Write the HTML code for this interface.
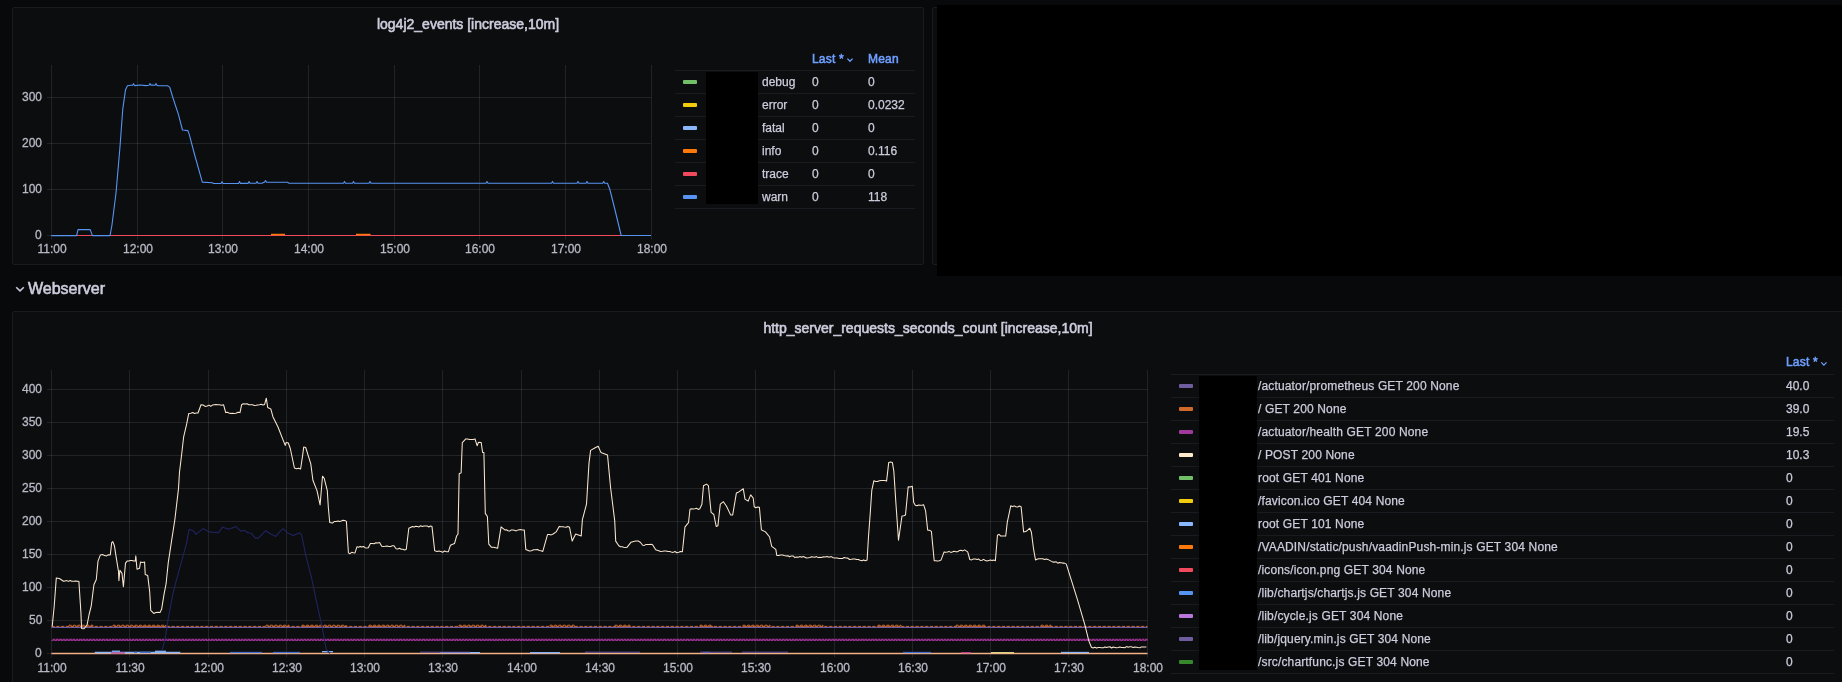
<!DOCTYPE html>
<html><head><meta charset="utf-8">
<style>
html,body{margin:0;padding:0;}
body{width:1842px;height:682px;overflow:hidden;position:relative;background:#08090b;font-family:"Liberation Sans",sans-serif;color:#ccccdc;}
.panel{position:absolute;background:#0c0d0f;border:1px solid #1a1b1f;border-radius:2px;box-sizing:border-box;}
.blk{position:absolute;background:#000;}
.title{position:absolute;font-size:14px;font-weight:400;-webkit-text-stroke:0.6px #ccccdc;line-height:14px;white-space:nowrap;color:#ccccdc;text-align:center;}
.ax,.lt,.lh{position:absolute;font-size:12px;line-height:12px;white-space:nowrap;}
.ax{color:#b9b9c6;-webkit-text-stroke:0.3px #b9b9c6;}
.c{text-align:center;}
.lt{color:#ccccdc;-webkit-text-stroke:0.25px #ccccdc;}
.lw{letter-spacing:0.15px;}
.lh{color:#6e9fff;font-weight:400;letter-spacing:0.2px;-webkit-text-stroke:0.55px #6e9fff;}
.sep{position:absolute;height:1px;background:#1a1b20;}
.bar{position:absolute;width:14px;height:4px;border-radius:1px;}
svg.ov{position:absolute;left:0;top:0;}
.title,.ax,.lt,.lh,.row{will-change:transform;}
.row{position:absolute;left:28px;top:281px;font-size:16px;font-weight:400;-webkit-text-stroke:0.6px #ccccdc;line-height:16px;color:#ccccdc;white-space:nowrap;}
</style></head><body>
<div class="panel" style="left:12px;top:7px;width:912px;height:258px;"></div>
<div class="panel" style="left:932px;top:7px;width:920px;height:258px;"></div>
<div class="panel" style="left:12px;top:311px;width:1832px;height:400px;"></div>
<div class="title" style="left:268px;top:17px;width:400px;">log4j2_events [increase,10m]</div>
<div class="title" style="left:628px;top:321px;width:600px;">http_server_requests_seconds_count [increase,10m]</div>
<svg class="ov" width="1842" height="682" viewBox="0 0 1842 682">
<line x1="51.5" y1="65.0" x2="51.5" y2="239.5" stroke="rgba(200,200,212,0.12)" stroke-width="1"/>
<line x1="137.5" y1="65.0" x2="137.5" y2="239.5" stroke="rgba(200,200,212,0.12)" stroke-width="1"/>
<line x1="222.5" y1="65.0" x2="222.5" y2="239.5" stroke="rgba(200,200,212,0.12)" stroke-width="1"/>
<line x1="308.5" y1="65.0" x2="308.5" y2="239.5" stroke="rgba(200,200,212,0.12)" stroke-width="1"/>
<line x1="394.5" y1="65.0" x2="394.5" y2="239.5" stroke="rgba(200,200,212,0.12)" stroke-width="1"/>
<line x1="479.5" y1="65.0" x2="479.5" y2="239.5" stroke="rgba(200,200,212,0.12)" stroke-width="1"/>
<line x1="565.5" y1="65.0" x2="565.5" y2="239.5" stroke="rgba(200,200,212,0.12)" stroke-width="1"/>
<line x1="651.5" y1="65.0" x2="651.5" y2="239.5" stroke="rgba(200,200,212,0.12)" stroke-width="1"/>
<line x1="47" y1="235.5" x2="651.0" y2="235.5" stroke="rgba(200,200,212,0.12)" stroke-width="1"/>
<line x1="47" y1="189.5" x2="651.0" y2="189.5" stroke="rgba(200,200,212,0.12)" stroke-width="1"/>
<line x1="47" y1="143.5" x2="651.0" y2="143.5" stroke="rgba(200,200,212,0.12)" stroke-width="1"/>
<line x1="47" y1="97.5" x2="651.0" y2="97.5" stroke="rgba(200,200,212,0.12)" stroke-width="1"/>
<line x1="51.5" y1="370" x2="51.5" y2="657.5" stroke="rgba(200,200,212,0.12)" stroke-width="1"/>
<line x1="129.5" y1="370" x2="129.5" y2="657.5" stroke="rgba(200,200,212,0.12)" stroke-width="1"/>
<line x1="208.5" y1="370" x2="208.5" y2="657.5" stroke="rgba(200,200,212,0.12)" stroke-width="1"/>
<line x1="286.5" y1="370" x2="286.5" y2="657.5" stroke="rgba(200,200,212,0.12)" stroke-width="1"/>
<line x1="364.5" y1="370" x2="364.5" y2="657.5" stroke="rgba(200,200,212,0.12)" stroke-width="1"/>
<line x1="442.5" y1="370" x2="442.5" y2="657.5" stroke="rgba(200,200,212,0.12)" stroke-width="1"/>
<line x1="521.5" y1="370" x2="521.5" y2="657.5" stroke="rgba(200,200,212,0.12)" stroke-width="1"/>
<line x1="599.5" y1="370" x2="599.5" y2="657.5" stroke="rgba(200,200,212,0.12)" stroke-width="1"/>
<line x1="677.5" y1="370" x2="677.5" y2="657.5" stroke="rgba(200,200,212,0.12)" stroke-width="1"/>
<line x1="755.5" y1="370" x2="755.5" y2="657.5" stroke="rgba(200,200,212,0.12)" stroke-width="1"/>
<line x1="834.5" y1="370" x2="834.5" y2="657.5" stroke="rgba(200,200,212,0.12)" stroke-width="1"/>
<line x1="912.5" y1="370" x2="912.5" y2="657.5" stroke="rgba(200,200,212,0.12)" stroke-width="1"/>
<line x1="990.5" y1="370" x2="990.5" y2="657.5" stroke="rgba(200,200,212,0.12)" stroke-width="1"/>
<line x1="1068.5" y1="370" x2="1068.5" y2="657.5" stroke="rgba(200,200,212,0.12)" stroke-width="1"/>
<line x1="1147.5" y1="370" x2="1147.5" y2="657.5" stroke="rgba(200,200,212,0.12)" stroke-width="1"/>
<line x1="47" y1="653.5" x2="1147.5" y2="653.5" stroke="rgba(200,200,212,0.12)" stroke-width="1"/>
<line x1="47" y1="620.5" x2="1147.5" y2="620.5" stroke="rgba(200,200,212,0.12)" stroke-width="1"/>
<line x1="47" y1="587.5" x2="1147.5" y2="587.5" stroke="rgba(200,200,212,0.12)" stroke-width="1"/>
<line x1="47" y1="554.5" x2="1147.5" y2="554.5" stroke="rgba(200,200,212,0.12)" stroke-width="1"/>
<line x1="47" y1="521.5" x2="1147.5" y2="521.5" stroke="rgba(200,200,212,0.12)" stroke-width="1"/>
<line x1="47" y1="488.5" x2="1147.5" y2="488.5" stroke="rgba(200,200,212,0.12)" stroke-width="1"/>
<line x1="47" y1="455.5" x2="1147.5" y2="455.5" stroke="rgba(200,200,212,0.12)" stroke-width="1"/>
<line x1="47" y1="422.5" x2="1147.5" y2="422.5" stroke="rgba(200,200,212,0.12)" stroke-width="1"/>
<line x1="47" y1="389.5" x2="1147.5" y2="389.5" stroke="rgba(200,200,212,0.12)" stroke-width="1"/>
<polyline points="51.5,235.5 651.0,235.5" fill="none" stroke="#F2495C" stroke-width="1.2"/>
<polyline points="271,234.5 285,234.5" fill="none" stroke="#FF780A" stroke-width="1.5"/>
<polyline points="356,234.5 370.5,234.5" fill="none" stroke="#FF780A" stroke-width="1.5"/>
<polyline points="51.4,235.6 76.6,235.6 78.0,229.6 90.2,229.6 92.4,235.6 110.0,235.6 111.9,225.5 116.0,193.0 120.0,146.8 122.8,108.8 125.5,89.9 127.4,85.8 131.0,85.2 132.5,85.3 133.5,83.7 134.5,85.5 135.0,85.6 140.0,85.0 146.0,85.6 149.0,85.3 150.0,83.5 151.0,85.2 152.0,85.1 155.0,85.3 156.0,83.6 157.0,85.5 158.0,85.6 167.5,85.8 169.7,87.1 173.0,98.0 178.4,114.3 182.5,130.0 187.9,130.6 189.3,134.6 194.7,155.0 202.3,182.1 212.3,182.7 213.7,183.5 221.0,183.5 222.0,181.7 223.0,183.5 238.5,183.4 239.5,181.6 240.5,183.4 248.0,183.4 249.0,181.6 250.0,183.3 256.0,183.3 257.0,181.5 258.0,183.3 262.0,183.3 264.0,182.3 264.5,182.3 265.5,180.5 266.5,182.3 275.0,182.2 287.5,182.2 289.0,183.2 343.5,183.2 344.5,181.4 345.5,183.2 352.5,183.2 353.5,181.4 354.5,183.2 369.0,183.2 370.0,181.4 371.0,183.2 486.0,183.2 487.0,181.4 488.0,183.2 551.5,183.2 552.5,181.4 553.5,183.2 577.0,183.2 578.0,181.4 579.0,183.2 586.0,183.2 587.0,181.4 588.0,183.2 602.7,183.2 603.7,181.4 604.7,183.2 607.5,183.2 610.0,190.0 615.0,210.0 621.2,235.5 651.0,235.5" fill="none" stroke="#5794F2" stroke-width="1.1" stroke-linejoin="round"/>
<polyline points="51.5,653.5 1147.5,653.5" fill="none" stroke="#F4B183" stroke-width="1.3"/>
<polyline points="94.8,652.5 180.3,652.5" fill="none" stroke="#8AB8FF" stroke-width="1.3"/>
<polyline points="111.9,651.2 120,651.2" fill="none" stroke="#8AB8FF" stroke-width="1.3"/>
<polyline points="111,653.0 125,653.0" fill="none" stroke="#C04090" stroke-width="1.3"/>
<polyline points="133.9,652.3 137,652.3" fill="none" stroke="#3F6FD0" stroke-width="1.3"/>
<polyline points="140,652.3 151,652.3" fill="none" stroke="#3F6FD0" stroke-width="1.3"/>
<polyline points="155,651.3 166,651.3" fill="none" stroke="#8AB8FF" stroke-width="1.3"/>
<polyline points="230,652.5 262,652.5" fill="none" stroke="#3F6FD0" stroke-width="1.3"/>
<polyline points="273,652.5 300,652.5" fill="none" stroke="#3F6FD0" stroke-width="1.3"/>
<polyline points="322,651.7 333,651.7" fill="none" stroke="#8AB8FF" stroke-width="1.3"/>
<polyline points="440,652.7 480,652.7" fill="none" stroke="#8AB8FF" stroke-width="1.3"/>
<polyline points="530,652.7 560,652.7" fill="none" stroke="#8AB8FF" stroke-width="1.3"/>
<polyline points="703,652.5 710,652.5" fill="none" stroke="#3F6FD0" stroke-width="1.3"/>
<polyline points="903,652.5 931,652.5" fill="none" stroke="#3F6FD0" stroke-width="1.3"/>
<polyline points="961,652.7 971,652.7" fill="none" stroke="#C04090" stroke-width="1.3"/>
<polyline points="991,652.7 1014,652.7" fill="none" stroke="#E8D890" stroke-width="1.3"/>
<polyline points="1061,652.5 1089,652.5" fill="none" stroke="#8AB8FF" stroke-width="1.3"/>
<polyline points="51.5,640.5 53.1,640.5 53.1,639.4 54.8,639.4 54.8,640.5 56.4,640.5 56.4,639.4 58.1,639.4 58.1,640.5 59.7,640.5 59.7,639.4 61.4,639.4 61.4,640.5 63.0,640.5 63.0,639.4 64.7,639.4 64.7,640.5 66.3,640.5 66.3,639.4 68.0,639.4 68.0,640.5 69.7,640.5 69.7,639.4 71.3,639.4 71.3,640.5 73.0,640.5 73.0,639.4 74.6,639.4 74.6,640.5 76.3,640.5 76.3,639.4 77.9,639.4 77.9,640.5 79.6,640.5 79.6,639.4 81.2,639.4 81.2,640.5 82.9,640.5 82.9,639.4 84.5,639.4 84.5,640.5 86.2,640.5 86.2,639.4 87.8,639.4 87.8,640.5 89.5,640.5 89.5,639.4 91.1,639.4 91.1,640.5 92.8,640.5 92.8,639.4 94.4,639.4 94.4,640.5 96.1,640.5 96.1,639.4 97.7,639.4 97.7,640.5 99.4,640.5 99.4,639.4 101.0,639.4 101.0,640.5 102.7,640.5 102.7,639.4 104.3,639.4 104.3,640.5 106.0,640.5 106.0,639.4 107.6,639.4 107.6,640.5 109.3,640.5 109.3,639.4 110.9,639.4 110.9,640.5 112.6,640.5 112.6,639.4 114.2,639.4 114.2,640.5 115.9,640.5 115.9,639.4 117.5,639.4 117.5,640.5 119.2,640.5 119.2,639.4 120.8,639.4 120.8,640.5 122.5,640.5 122.5,639.4 124.1,639.4 124.1,640.5 125.8,640.5 125.8,639.4 127.4,639.4 127.4,640.5 129.1,640.5 129.1,639.4 130.7,639.4 130.7,640.5 132.4,640.5 132.4,639.4 134.0,639.4 134.0,640.5 135.7,640.5 135.7,639.4 137.3,639.4 137.3,640.5 139.0,640.5 139.0,639.4 140.6,639.4 140.6,640.5 142.3,640.5 142.3,639.4 143.9,639.4 143.9,640.5 145.6,640.5 145.6,639.4 147.2,639.4 147.2,640.5 148.9,640.5 148.9,639.4 150.5,639.4 150.5,640.5 152.2,640.5 152.2,639.4 153.8,639.4 153.8,640.5 155.5,640.5 155.5,639.4 157.1,639.4 157.1,640.5 158.8,640.5 158.8,639.4 160.4,639.4 160.4,640.5 162.1,640.5 162.1,639.4 163.7,639.4 163.7,640.5 165.4,640.5 165.4,639.4 167.0,639.4 167.0,640.5 168.7,640.5 168.7,639.4 170.3,639.4 170.3,640.5 172.0,640.5 172.0,639.4 173.6,639.4 173.6,640.5 175.3,640.5 175.3,639.4 176.9,639.4 176.9,640.5 178.6,640.5 178.6,639.4 180.2,639.4 180.2,640.5 181.9,640.5 181.9,639.4 183.5,639.4 183.5,640.5 185.2,640.5 185.2,639.4 186.8,639.4 186.8,640.5 188.5,640.5 188.5,639.4 190.1,639.4 190.1,640.5 191.8,640.5 191.8,639.4 193.4,639.4 193.4,640.5 195.1,640.5 195.1,639.4 196.7,639.4 196.7,640.5 198.4,640.5 198.4,639.4 200.0,639.4 200.0,640.5 201.7,640.5 201.7,639.4 203.3,639.4 203.3,640.5 205.0,640.5 205.0,639.4 206.6,639.4 206.6,640.5 208.3,640.5 208.3,639.4 209.9,639.4 209.9,640.5 211.6,640.5 211.6,639.4 213.2,639.4 213.2,640.5 214.9,640.5 214.9,639.4 216.5,639.4 216.5,640.5 218.2,640.5 218.2,639.4 219.8,639.4 219.8,640.5 221.5,640.5 221.5,639.4 223.1,639.4 223.1,640.5 224.8,640.5 224.8,639.4 226.4,639.4 226.4,640.5 228.1,640.5 228.1,639.4 229.7,639.4 229.7,640.5 231.4,640.5 231.4,639.4 233.0,639.4 233.0,640.5 234.7,640.5 234.7,639.4 236.3,639.4 236.3,640.5 238.0,640.5 238.0,639.4 239.6,639.4 239.6,640.5 241.3,640.5 241.3,639.4 242.9,639.4 242.9,640.5 244.6,640.5 244.6,639.4 246.2,639.4 246.2,640.5 247.9,640.5 247.9,639.4 249.5,639.4 249.5,640.5 251.2,640.5 251.2,639.4 252.8,639.4 252.8,640.5 254.5,640.5 254.5,639.4 256.1,639.4 256.1,640.5 257.8,640.5 257.8,639.4 259.4,639.4 259.4,640.5 261.1,640.5 261.1,639.4 262.7,639.4 262.7,640.5 264.4,640.5 264.4,639.4 266.0,639.4 266.0,640.5 267.7,640.5 267.7,639.4 269.3,639.4 269.3,640.5 271.0,640.5 271.0,639.4 272.6,639.4 272.6,640.5 274.3,640.5 274.3,639.4 275.9,639.4 275.9,640.5 277.6,640.5 277.6,639.4 279.2,639.4 279.2,640.5 280.9,640.5 280.9,639.4 282.5,639.4 282.5,640.5 284.2,640.5 284.2,639.4 285.8,639.4 285.8,640.5 287.5,640.5 287.5,639.4 289.1,639.4 289.1,640.5 290.8,640.5 290.8,639.4 292.4,639.4 292.4,640.5 294.1,640.5 294.1,639.4 295.7,639.4 295.7,640.5 297.4,640.5 297.4,639.4 299.0,639.4 299.0,640.5 300.7,640.5 300.7,639.4 302.3,639.4 302.3,640.5 303.9,640.5 303.9,639.4 305.6,639.4 305.6,640.5 307.2,640.5 307.2,639.4 308.9,639.4 308.9,640.5 310.5,640.5 310.5,639.4 312.2,639.4 312.2,640.5 313.8,640.5 313.8,639.4 315.5,639.4 315.5,640.5 317.1,640.5 317.1,639.4 318.8,639.4 318.8,640.5 320.4,640.5 320.4,639.4 322.1,639.4 322.1,640.5 323.7,640.5 323.7,639.4 325.4,639.4 325.4,640.5 327.0,640.5 327.0,639.4 328.7,639.4 328.7,640.5 330.3,640.5 330.3,639.4 332.0,639.4 332.0,640.5 333.6,640.5 333.6,639.4 335.3,639.4 335.3,640.5 336.9,640.5 336.9,639.4 338.6,639.4 338.6,640.5 340.2,640.5 340.2,639.4 341.9,639.4 341.9,640.5 343.5,640.5 343.5,639.4 345.2,639.4 345.2,640.5 346.8,640.5 346.8,639.4 348.5,639.4 348.5,640.5 350.1,640.5 350.1,639.4 351.8,639.4 351.8,640.5 353.4,640.5 353.4,639.4 355.1,639.4 355.1,640.5 356.7,640.5 356.7,639.4 358.4,639.4 358.4,640.5 360.0,640.5 360.0,639.4 361.7,639.4 361.7,640.5 363.3,640.5 363.3,639.4 365.0,639.4 365.0,640.5 366.6,640.5 366.6,639.4 368.3,639.4 368.3,640.5 369.9,640.5 369.9,639.4 371.6,639.4 371.6,640.5 373.2,640.5 373.2,639.4 374.9,639.4 374.9,640.5 376.5,640.5 376.5,639.4 378.2,639.4 378.2,640.5 379.8,640.5 379.8,639.4 381.5,639.4 381.5,640.5 383.1,640.5 383.1,639.4 384.8,639.4 384.8,640.5 386.4,640.5 386.4,639.4 388.1,639.4 388.1,640.5 389.7,640.5 389.7,639.4 391.4,639.4 391.4,640.5 393.0,640.5 393.0,639.4 394.7,639.4 394.7,640.5 396.3,640.5 396.3,639.4 398.0,639.4 398.0,640.5 399.6,640.5 399.6,639.4 401.3,639.4 401.3,640.5 402.9,640.5 402.9,639.4 404.6,639.4 404.6,640.5 406.2,640.5 406.2,639.4 407.9,639.4 407.9,640.5 409.5,640.5 409.5,639.4 411.2,639.4 411.2,640.5 412.8,640.5 412.8,639.4 414.5,639.4 414.5,640.5 416.1,640.5 416.1,639.4 417.8,639.4 417.8,640.5 419.4,640.5 419.4,639.4 421.1,639.4 421.1,640.5 422.7,640.5 422.7,639.4 424.4,639.4 424.4,640.5 426.0,640.5 426.0,639.4 427.7,639.4 427.7,640.5 429.3,640.5 429.3,639.4 431.0,639.4 431.0,640.5 432.6,640.5 432.6,639.4 434.3,639.4 434.3,640.5 435.9,640.5 435.9,639.4 437.6,639.4 437.6,640.5 439.2,640.5 439.2,639.4 440.9,639.4 440.9,640.5 442.5,640.5 442.5,639.4 444.2,639.4 444.2,640.5 445.8,640.5 445.8,639.4 447.5,639.4 447.5,640.5 449.1,640.5 449.1,639.4 450.8,639.4 450.8,640.5 452.4,640.5 452.4,639.4 454.1,639.4 454.1,640.5 455.7,640.5 455.7,639.4 457.4,639.4 457.4,640.5 459.0,640.5 459.0,639.4 460.7,639.4 460.7,640.5 462.3,640.5 462.3,639.4 464.0,639.4 464.0,640.5 465.6,640.5 465.6,639.4 467.3,639.4 467.3,640.5 468.9,640.5 468.9,639.4 470.6,639.4 470.6,640.5 472.2,640.5 472.2,639.4 473.9,639.4 473.9,640.5 475.5,640.5 475.5,639.4 477.2,639.4 477.2,640.5 478.8,640.5 478.8,639.4 480.5,639.4 480.5,640.5 482.1,640.5 482.1,639.4 483.8,639.4 483.8,640.5 485.4,640.5 485.4,639.4 487.1,639.4 487.1,640.5 488.7,640.5 488.7,639.4 490.4,639.4 490.4,640.5 492.0,640.5 492.0,639.4 493.7,639.4 493.7,640.5 495.3,640.5 495.3,639.4 497.0,639.4 497.0,640.5 498.6,640.5 498.6,639.4 500.3,639.4 500.3,640.5 501.9,640.5 501.9,639.4 503.6,639.4 503.6,640.5 505.2,640.5 505.2,639.4 506.9,639.4 506.9,640.5 508.5,640.5 508.5,639.4 510.2,639.4 510.2,640.5 511.8,640.5 511.8,639.4 513.5,639.4 513.5,640.5 515.1,640.5 515.1,639.4 516.8,639.4 516.8,640.5 518.4,640.5 518.4,639.4 520.1,639.4 520.1,640.5 521.7,640.5 521.7,639.4 523.4,639.4 523.4,640.5 525.0,640.5 525.0,639.4 526.7,639.4 526.7,640.5 528.3,640.5 528.3,639.4 530.0,639.4 530.0,640.5 531.6,640.5 531.6,639.4 533.3,639.4 533.3,640.5 534.9,640.5 534.9,639.4 536.6,639.4 536.6,640.5 538.2,640.5 538.2,639.4 539.9,639.4 539.9,640.5 541.5,640.5 541.5,639.4 543.2,639.4 543.2,640.5 544.8,640.5 544.8,639.4 546.5,639.4 546.5,640.5 548.1,640.5 548.1,639.4 549.8,639.4 549.8,640.5 551.4,640.5 551.4,639.4 553.1,639.4 553.1,640.5 554.7,640.5 554.7,639.4 556.4,639.4 556.4,640.5 558.0,640.5 558.0,639.4 559.7,639.4 559.7,640.5 561.3,640.5 561.3,639.4 563.0,639.4 563.0,640.5 564.6,640.5 564.6,639.4 566.3,639.4 566.3,640.5 567.9,640.5 567.9,639.4 569.6,639.4 569.6,640.5 571.2,640.5 571.2,639.4 572.9,639.4 572.9,640.5 574.5,640.5 574.5,639.4 576.2,639.4 576.2,640.5 577.8,640.5 577.8,639.4 579.5,639.4 579.5,640.5 581.1,640.5 581.1,639.4 582.8,639.4 582.8,640.5 584.4,640.5 584.4,639.4 586.1,639.4 586.1,640.5 587.7,640.5 587.7,639.4 589.4,639.4 589.4,640.5 591.0,640.5 591.0,639.4 592.7,639.4 592.7,640.5 594.3,640.5 594.3,639.4 596.0,639.4 596.0,640.5 597.6,640.5 597.6,639.4 599.3,639.4 599.3,640.5 600.9,640.5 600.9,639.4 602.6,639.4 602.6,640.5 604.2,640.5 604.2,639.4 605.9,639.4 605.9,640.5 607.5,640.5 607.5,639.4 609.2,639.4 609.2,640.5 610.8,640.5 610.8,639.4 612.5,639.4 612.5,640.5 614.1,640.5 614.1,639.4 615.8,639.4 615.8,640.5 617.4,640.5 617.4,639.4 619.1,639.4 619.1,640.5 620.7,640.5 620.7,639.4 622.4,639.4 622.4,640.5 624.0,640.5 624.0,639.4 625.7,639.4 625.7,640.5 627.3,640.5 627.3,639.4 629.0,639.4 629.0,640.5 630.6,640.5 630.6,639.4 632.3,639.4 632.3,640.5 633.9,640.5 633.9,639.4 635.6,639.4 635.6,640.5 637.2,640.5 637.2,639.4 638.9,639.4 638.9,640.5 640.5,640.5 640.5,639.4 642.2,639.4 642.2,640.5 643.8,640.5 643.8,639.4 645.5,639.4 645.5,640.5 647.1,640.5 647.1,639.4 648.8,639.4 648.8,640.5 650.4,640.5 650.4,639.4 652.1,639.4 652.1,640.5 653.7,640.5 653.7,639.4 655.4,639.4 655.4,640.5 657.0,640.5 657.0,639.4 658.7,639.4 658.7,640.5 660.3,640.5 660.3,639.4 662.0,639.4 662.0,640.5 663.6,640.5 663.6,639.4 665.3,639.4 665.3,640.5 666.9,640.5 666.9,639.4 668.6,639.4 668.6,640.5 670.2,640.5 670.2,639.4 671.9,639.4 671.9,640.5 673.5,640.5 673.5,639.4 675.2,639.4 675.2,640.5 676.8,640.5 676.8,639.4 678.5,639.4 678.5,640.5 680.1,640.5 680.1,639.4 681.8,639.4 681.8,640.5 683.4,640.5 683.4,639.4 685.1,639.4 685.1,640.5 686.7,640.5 686.7,639.4 688.4,639.4 688.4,640.5 690.0,640.5 690.0,639.4 691.7,639.4 691.7,640.5 693.3,640.5 693.3,639.4 695.0,639.4 695.0,640.5 696.6,640.5 696.6,639.4 698.3,639.4 698.3,640.5 699.9,640.5 699.9,639.4 701.6,639.4 701.6,640.5 703.2,640.5 703.2,639.4 704.9,639.4 704.9,640.5 706.5,640.5 706.5,639.4 708.2,639.4 708.2,640.5 709.8,640.5 709.8,639.4 711.5,639.4 711.5,640.5 713.1,640.5 713.1,639.4 714.8,639.4 714.8,640.5 716.4,640.5 716.4,639.4 718.1,639.4 718.1,640.5 719.7,640.5 719.7,639.4 721.4,639.4 721.4,640.5 723.0,640.5 723.0,639.4 724.7,639.4 724.7,640.5 726.3,640.5 726.3,639.4 728.0,639.4 728.0,640.5 729.6,640.5 729.6,639.4 731.3,639.4 731.3,640.5 732.9,640.5 732.9,639.4 734.6,639.4 734.6,640.5 736.2,640.5 736.2,639.4 737.9,639.4 737.9,640.5 739.5,640.5 739.5,639.4 741.2,639.4 741.2,640.5 742.8,640.5 742.8,639.4 744.5,639.4 744.5,640.5 746.1,640.5 746.1,639.4 747.8,639.4 747.8,640.5 749.4,640.5 749.4,639.4 751.1,639.4 751.1,640.5 752.7,640.5 752.7,639.4 754.4,639.4 754.4,640.5 756.0,640.5 756.0,639.4 757.7,639.4 757.7,640.5 759.3,640.5 759.3,639.4 761.0,639.4 761.0,640.5 762.6,640.5 762.6,639.4 764.3,639.4 764.3,640.5 765.9,640.5 765.9,639.4 767.6,639.4 767.6,640.5 769.2,640.5 769.2,639.4 770.9,639.4 770.9,640.5 772.5,640.5 772.5,639.4 774.2,639.4 774.2,640.5 775.8,640.5 775.8,639.4 777.5,639.4 777.5,640.5 779.1,640.5 779.1,639.4 780.8,639.4 780.8,640.5 782.4,640.5 782.4,639.4 784.1,639.4 784.1,640.5 785.7,640.5 785.7,639.4 787.4,639.4 787.4,640.5 789.0,640.5 789.0,639.4 790.7,639.4 790.7,640.5 792.3,640.5 792.3,639.4 794.0,639.4 794.0,640.5 795.6,640.5 795.6,639.4 797.3,639.4 797.3,640.5 798.9,640.5 798.9,639.4 800.6,639.4 800.6,640.5 802.2,640.5 802.2,639.4 803.9,639.4 803.9,640.5 805.5,640.5 805.5,639.4 807.2,639.4 807.2,640.5 808.8,640.5 808.8,639.4 810.5,639.4 810.5,640.5 812.1,640.5 812.1,639.4 813.8,639.4 813.8,640.5 815.4,640.5 815.4,639.4 817.1,639.4 817.1,640.5 818.7,640.5 818.7,639.4 820.4,639.4 820.4,640.5 822.0,640.5 822.0,639.4 823.7,639.4 823.7,640.5 825.3,640.5 825.3,639.4 827.0,639.4 827.0,640.5 828.6,640.5 828.6,639.4 830.3,639.4 830.3,640.5 831.9,640.5 831.9,639.4 833.6,639.4 833.6,640.5 835.2,640.5 835.2,639.4 836.9,639.4 836.9,640.5 838.5,640.5 838.5,639.4 840.2,639.4 840.2,640.5 841.8,640.5 841.8,639.4 843.5,639.4 843.5,640.5 845.1,640.5 845.1,639.4 846.8,639.4 846.8,640.5 848.4,640.5 848.4,639.4 850.1,639.4 850.1,640.5 851.7,640.5 851.7,639.4 853.4,639.4 853.4,640.5 855.0,640.5 855.0,639.4 856.7,639.4 856.7,640.5 858.3,640.5 858.3,639.4 860.0,639.4 860.0,640.5 861.6,640.5 861.6,639.4 863.3,639.4 863.3,640.5 864.9,640.5 864.9,639.4 866.6,639.4 866.6,640.5 868.2,640.5 868.2,639.4 869.9,639.4 869.9,640.5 871.5,640.5 871.5,639.4 873.2,639.4 873.2,640.5 874.8,640.5 874.8,639.4 876.5,639.4 876.5,640.5 878.1,640.5 878.1,639.4 879.8,639.4 879.8,640.5 881.4,640.5 881.4,639.4 883.1,639.4 883.1,640.5 884.7,640.5 884.7,639.4 886.4,639.4 886.4,640.5 888.0,640.5 888.0,639.4 889.7,639.4 889.7,640.5 891.3,640.5 891.3,639.4 893.0,639.4 893.0,640.5 894.6,640.5 894.6,639.4 896.3,639.4 896.3,640.5 897.9,640.5 897.9,639.4 899.6,639.4 899.6,640.5 901.2,640.5 901.2,639.4 902.9,639.4 902.9,640.5 904.5,640.5 904.5,639.4 906.2,639.4 906.2,640.5 907.8,640.5 907.8,639.4 909.5,639.4 909.5,640.5 911.1,640.5 911.1,639.4 912.8,639.4 912.8,640.5 914.4,640.5 914.4,639.4 916.1,639.4 916.1,640.5 917.7,640.5 917.7,639.4 919.4,639.4 919.4,640.5 921.0,640.5 921.0,639.4 922.7,639.4 922.7,640.5 924.3,640.5 924.3,639.4 926.0,639.4 926.0,640.5 927.6,640.5 927.6,639.4 929.3,639.4 929.3,640.5 930.9,640.5 930.9,639.4 932.6,639.4 932.6,640.5 934.2,640.5 934.2,639.4 935.9,639.4 935.9,640.5 937.5,640.5 937.5,639.4 939.2,639.4 939.2,640.5 940.8,640.5 940.8,639.4 942.5,639.4 942.5,640.5 944.1,640.5 944.1,639.4 945.8,639.4 945.8,640.5 947.4,640.5 947.4,639.4 949.1,639.4 949.1,640.5 950.7,640.5 950.7,639.4 952.4,639.4 952.4,640.5 954.0,640.5 954.0,639.4 955.7,639.4 955.7,640.5 957.3,640.5 957.3,639.4 959.0,639.4 959.0,640.5 960.6,640.5 960.6,639.4 962.3,639.4 962.3,640.5 963.9,640.5 963.9,639.4 965.6,639.4 965.6,640.5 967.2,640.5 967.2,639.4 968.9,639.4 968.9,640.5 970.5,640.5 970.5,639.4 972.2,639.4 972.2,640.5 973.8,640.5 973.8,639.4 975.5,639.4 975.5,640.5 977.1,640.5 977.1,639.4 978.8,639.4 978.8,640.5 980.4,640.5 980.4,639.4 982.1,639.4 982.1,640.5 983.7,640.5 983.7,639.4 985.4,639.4 985.4,640.5 987.0,640.5 987.0,639.4 988.7,639.4 988.7,640.5 990.3,640.5 990.3,639.4 992.0,639.4 992.0,640.5 993.6,640.5 993.6,639.4 995.3,639.4 995.3,640.5 996.9,640.5 996.9,639.4 998.6,639.4 998.6,640.5 1000.2,640.5 1000.2,639.4 1001.9,639.4 1001.9,640.5 1003.5,640.5 1003.5,639.4 1005.2,639.4 1005.2,640.5 1006.8,640.5 1006.8,639.4 1008.5,639.4 1008.5,640.5 1010.1,640.5 1010.1,639.4 1011.8,639.4 1011.8,640.5 1013.4,640.5 1013.4,639.4 1015.1,639.4 1015.1,640.5 1016.7,640.5 1016.7,639.4 1018.4,639.4 1018.4,640.5 1020.0,640.5 1020.0,639.4 1021.7,639.4 1021.7,640.5 1023.3,640.5 1023.3,639.4 1025.0,639.4 1025.0,640.5 1026.6,640.5 1026.6,639.4 1028.3,639.4 1028.3,640.5 1029.9,640.5 1029.9,639.4 1031.6,639.4 1031.6,640.5 1033.2,640.5 1033.2,639.4 1034.9,639.4 1034.9,640.5 1036.5,640.5 1036.5,639.4 1038.2,639.4 1038.2,640.5 1039.8,640.5 1039.8,639.4 1041.5,639.4 1041.5,640.5 1043.1,640.5 1043.1,639.4 1044.8,639.4 1044.8,640.5 1046.4,640.5 1046.4,639.4 1048.1,639.4 1048.1,640.5 1049.7,640.5 1049.7,639.4 1051.4,639.4 1051.4,640.5 1053.0,640.5 1053.0,639.4 1054.7,639.4 1054.7,640.5 1056.3,640.5 1056.3,639.4 1058.0,639.4 1058.0,640.5 1059.6,640.5 1059.6,639.4 1061.3,639.4 1061.3,640.5 1062.9,640.5 1062.9,639.4 1064.6,639.4 1064.6,640.5 1066.2,640.5 1066.2,639.4 1067.9,639.4 1067.9,640.5 1069.5,640.5 1069.5,639.4 1071.2,639.4 1071.2,640.5 1072.8,640.5 1072.8,639.4 1074.5,639.4 1074.5,640.5 1076.1,640.5 1076.1,639.4 1077.8,639.4 1077.8,640.5 1079.4,640.5 1079.4,639.4 1081.1,639.4 1081.1,640.5 1082.7,640.5 1082.7,639.4 1084.4,639.4 1084.4,640.5 1086.0,640.5 1086.0,639.4 1087.7,639.4 1087.7,640.5 1089.3,640.5 1089.3,639.4 1091.0,639.4 1091.0,640.5 1092.6,640.5 1092.6,639.4 1094.3,639.4 1094.3,640.5 1095.9,640.5 1095.9,639.4 1097.6,639.4 1097.6,640.5 1099.2,640.5 1099.2,639.4 1100.9,639.4 1100.9,640.5 1102.5,640.5 1102.5,639.4 1104.2,639.4 1104.2,640.5 1105.8,640.5 1105.8,639.4 1107.5,639.4 1107.5,640.5 1109.1,640.5 1109.1,639.4 1110.8,639.4 1110.8,640.5 1112.4,640.5 1112.4,639.4 1114.1,639.4 1114.1,640.5 1115.7,640.5 1115.7,639.4 1117.4,639.4 1117.4,640.5 1119.0,640.5 1119.0,639.4 1120.7,639.4 1120.7,640.5 1122.3,640.5 1122.3,639.4 1124.0,639.4 1124.0,640.5 1125.6,640.5 1125.6,639.4 1127.3,639.4 1127.3,640.5 1128.9,640.5 1128.9,639.4 1130.6,639.4 1130.6,640.5 1132.2,640.5 1132.2,639.4 1133.9,639.4 1133.9,640.5 1135.5,640.5 1135.5,639.4 1137.2,639.4 1137.2,640.5 1138.8,640.5 1138.8,639.4 1140.5,639.4 1140.5,640.5 1142.1,640.5 1142.1,639.4 1143.8,639.4 1143.8,640.5 1145.4,640.5 1145.4,639.4 1147.1,639.4 1147.1,640.5 1147.5,640.5" fill="none" stroke="#9A3190" stroke-width="1.15"/>
<polyline points="51.5,627.4 1147.5,627.4" fill="none" stroke="#6E5BA8" stroke-width="1.4"/>
<polyline points="51.5,626.4 1147.5,626.4" fill="none" stroke="#C8682A" stroke-width="1.0" stroke-dasharray="3.2 1.6"/>
<polyline points="69.0,626.4 69.0,625.2 71.2,625.2 71.2,626.4 73.4,626.4 73.4,625.2 75.6,625.2 75.6,626.4 77.8,626.4 77.8,625.2 80.0,625.2 80.0,626.4 82.2,626.4 82.2,625.2 84.4,625.2 84.4,626.4 86.6,626.4 86.6,625.2 88.8,625.2 88.8,626.4 91.0,626.4 91.0,625.2 93.0,625.2 93.0,626.4" fill="none" stroke="#C8682A" stroke-width="1.0"/>
<polyline points="113.0,626.4 113.0,625.2 115.2,625.2 115.2,626.4 117.4,626.4 117.4,625.2 119.6,625.2 119.6,626.4 121.8,626.4 121.8,625.2 124.0,625.2 124.0,626.4 126.2,626.4 126.2,625.2 128.4,625.2 128.4,626.4 130.6,626.4 130.6,625.2 132.8,625.2 132.8,626.4 135.0,626.4 135.0,625.2 137.2,625.2 137.2,626.4 139.4,626.4 139.4,625.2 141.6,625.2 141.6,626.4 143.8,626.4 143.8,625.2 146.0,625.2 146.0,626.4 148.2,626.4 148.2,625.2 150.4,625.2 150.4,626.4 152.6,626.4 152.6,625.2 154.8,625.2 154.8,626.4 157.0,626.4 157.0,625.2 159.2,625.2 159.2,626.4 161.4,626.4 161.4,625.2 163.6,625.2 163.6,626.4 165.8,626.4 165.8,625.2 166.0,625.2 166.0,626.4" fill="none" stroke="#C8682A" stroke-width="1.0"/>
<polyline points="266.0,626.4 266.0,625.2 268.2,625.2 268.2,626.4 270.4,626.4 270.4,625.2 272.6,625.2 272.6,626.4 274.8,626.4 274.8,625.2 277.0,625.2 277.0,626.4 279.2,626.4 279.2,625.2 281.4,625.2 281.4,626.4 283.6,626.4 283.6,625.2 285.8,625.2 285.8,626.4 288.0,626.4 288.0,625.2 289.0,625.2 289.0,626.4" fill="none" stroke="#C8682A" stroke-width="1.0"/>
<polyline points="302.0,626.4 302.0,625.2 304.2,625.2 304.2,626.4 306.4,626.4 306.4,625.2 308.6,625.2 308.6,626.4 310.8,626.4 310.8,625.2 313.0,625.2 313.0,626.4 315.2,626.4 315.2,625.2 317.4,625.2 317.4,626.4 319.6,626.4 319.6,625.2 321.8,625.2 321.8,626.4 324.0,626.4 324.0,625.2 326.2,625.2 326.2,626.4 328.4,626.4 328.4,625.2 330.6,625.2 330.6,626.4 332.8,626.4 332.8,625.2 335.0,625.2 335.0,626.4 337.2,626.4 337.2,625.2 339.4,625.2 339.4,626.4 341.6,626.4 341.6,625.2 343.8,625.2 343.8,626.4 346.0,626.4 346.0,625.2 346.0,625.2 346.0,626.4" fill="none" stroke="#C8682A" stroke-width="1.0"/>
<polyline points="369.0,626.4 369.0,625.2 371.2,625.2 371.2,626.4 373.4,626.4 373.4,625.2 375.6,625.2 375.6,626.4 377.8,626.4 377.8,625.2 380.0,625.2 380.0,626.4 382.2,626.4 382.2,625.2 384.4,625.2 384.4,626.4 386.6,626.4 386.6,625.2 388.8,625.2 388.8,626.4 391.0,626.4 391.0,625.2 393.2,625.2 393.2,626.4 395.4,626.4 395.4,625.2 397.6,625.2 397.6,626.4 399.8,626.4 399.8,625.2 402.0,625.2 402.0,626.4 404.2,626.4 404.2,625.2 405.0,625.2 405.0,626.4" fill="none" stroke="#C8682A" stroke-width="1.0"/>
<polyline points="459.0,626.4 459.0,625.2 461.2,625.2 461.2,626.4 463.4,626.4 463.4,625.2 465.6,625.2 465.6,626.4 467.8,626.4 467.8,625.2 470.0,625.2 470.0,626.4 472.2,626.4 472.2,625.2 474.4,625.2 474.4,626.4 476.6,626.4 476.6,625.2 478.8,625.2 478.8,626.4 481.0,626.4 481.0,625.2 483.2,625.2 483.2,626.4 485.4,626.4 485.4,625.2 486.0,625.2 486.0,626.4" fill="none" stroke="#C8682A" stroke-width="1.0"/>
<polyline points="550.0,626.4 550.0,625.2 552.2,625.2 552.2,626.4 554.4,626.4 554.4,625.2 556.6,625.2 556.6,626.4 558.8,626.4 558.8,625.2 561.0,625.2 561.0,626.4 563.2,626.4 563.2,625.2 565.4,625.2 565.4,626.4 567.6,626.4 567.6,625.2 569.8,625.2 569.8,626.4 572.0,626.4 572.0,625.2 574.2,625.2 574.2,626.4 575.0,626.4 575.0,626.4" fill="none" stroke="#C8682A" stroke-width="1.0"/>
<polyline points="615.0,626.4 615.0,625.2 617.2,625.2 617.2,626.4 619.4,626.4 619.4,625.2 621.6,625.2 621.6,626.4 623.8,626.4 623.8,625.2 626.0,625.2 626.0,626.4 628.2,626.4 628.2,625.2 630.0,625.2 630.0,626.4" fill="none" stroke="#C8682A" stroke-width="1.0"/>
<polyline points="700.0,626.4 700.0,625.2 702.2,625.2 702.2,626.4 704.4,626.4 704.4,625.2 706.6,625.2 706.6,626.4 708.8,626.4 708.8,625.2 711.0,625.2 711.0,626.4 713.0,626.4 713.0,626.4" fill="none" stroke="#C8682A" stroke-width="1.0"/>
<polyline points="743.0,626.4 743.0,625.2 745.2,625.2 745.2,626.4 747.4,626.4 747.4,625.2 749.6,625.2 749.6,626.4 751.8,626.4 751.8,625.2 754.0,625.2 754.0,626.4 756.2,626.4 756.2,625.2 758.4,625.2 758.4,626.4 760.6,626.4 760.6,625.2 762.8,625.2 762.8,626.4 765.0,626.4 765.0,625.2 767.2,625.2 767.2,626.4 769.4,626.4 769.4,625.2 770.0,625.2 770.0,626.4" fill="none" stroke="#C8682A" stroke-width="1.0"/>
<polyline points="796.0,626.4 796.0,625.2 798.2,625.2 798.2,626.4 800.4,626.4 800.4,625.2 802.6,625.2 802.6,626.4 804.8,626.4 804.8,625.2 807.0,625.2 807.0,626.4 809.2,626.4 809.2,625.2 811.4,625.2 811.4,626.4 813.6,626.4 813.6,625.2 815.8,625.2 815.8,626.4 818.0,626.4 818.0,625.2 820.2,625.2 820.2,626.4 822.4,626.4 822.4,625.2 823.0,625.2 823.0,626.4" fill="none" stroke="#C8682A" stroke-width="1.0"/>
<polyline points="878.0,626.4 878.0,625.2 880.2,625.2 880.2,626.4 882.4,626.4 882.4,625.2 884.6,625.2 884.6,626.4 886.8,626.4 886.8,625.2 889.0,625.2 889.0,626.4 891.2,626.4 891.2,625.2 893.4,625.2 893.4,626.4 895.6,626.4 895.6,625.2 897.8,625.2 897.8,626.4 900.0,626.4 900.0,625.2 901.0,625.2 901.0,626.4" fill="none" stroke="#C8682A" stroke-width="1.0"/>
<polyline points="956.0,626.4 956.0,625.2 958.2,625.2 958.2,626.4 960.4,626.4 960.4,625.2 962.6,625.2 962.6,626.4 964.8,626.4 964.8,625.2 967.0,625.2 967.0,626.4 969.2,626.4 969.2,625.2 971.4,625.2 971.4,626.4 973.6,626.4 973.6,625.2 975.8,625.2 975.8,626.4 978.0,626.4 978.0,625.2 980.2,625.2 980.2,626.4 982.4,626.4 982.4,625.2 984.6,625.2 984.6,626.4 986.0,626.4 986.0,626.4" fill="none" stroke="#C8682A" stroke-width="1.0"/>
<polyline points="1041.0,626.4 1041.0,625.2 1043.2,625.2 1043.2,626.4 1045.4,626.4 1045.4,625.2 1047.6,625.2 1047.6,626.4 1049.8,626.4 1049.8,625.2 1051.0,625.2 1051.0,626.4" fill="none" stroke="#C8682A" stroke-width="1.0"/>
<polyline points="700,652.2 732,652.2" fill="none" stroke="#6a5aa8" stroke-width="1.0"/>
<polyline points="742,652.2 788,652.2" fill="none" stroke="#6a5aa8" stroke-width="1.0"/>
<polyline points="420,652.2 470,652.2" fill="none" stroke="#6a5aa8" stroke-width="1.0"/>
<polyline points="585,652.2 640,652.2" fill="none" stroke="#6a5aa8" stroke-width="1.0"/>
<polyline points="162.0,650.4 165.1,639.1 168.2,618.6 173.3,591.9 180.5,565.2 186.7,542.6 189.1,529.2 193.9,531.3 195.9,534.4 203.1,528.6 209.3,531.9 218.5,532.7 222.6,527.2 228.8,529.2 236.0,526.6 241.1,531.3 244.1,530.3 248.2,532.7 251.3,533.3 255.4,538.1 258.5,538.1 265.7,530.7 270.8,534.0 275.9,536.4 279.0,532.7 283.1,528.6 287.2,532.7 293.4,535.4 299.5,532.7 301.6,534.8 305.7,554.9 311.9,579.5 317.0,604.2 322.1,626.8 326.2,649.4 330.0,653.3" fill="none" stroke="#20245e" stroke-width="1.1" stroke-linejoin="round"/>
<polyline points="52.2,626.4 54.2,606.2 56.3,577.9 59.4,578.5 63.5,581.2 65.1,580.9 66.8,580.6 68.4,581.4 70.1,580.5 71.7,581.2 73.8,581.3 75.8,581.0 77.9,581.2 78.9,581.6 80.9,612.4 81.6,628.4 84.0,628.8 87.1,624.7 89.1,614.5 91.2,606.2 93.9,584.7 96.3,579.5 98.0,561.1 100.4,554.9 102.5,554.5 104.5,555.6 106.6,555.9 108.4,554.7 110.3,554.9 111.7,542.6 112.8,541.6 114.4,545.7 115.8,554.9 118.5,571.3 118.9,580.6 119.9,570.3 122.0,573.4 123.4,586.7 125.5,563.1 127.1,561.1 128.7,561.0 130.4,560.4 132.0,560.4 133.7,561.0 135.3,561.1 135.8,555.9 137.0,569.3 139.5,568.3 140.5,562.1 142.6,562.6 144.6,562.1 145.2,574.4 147.7,575.4 149.7,591.9 150.7,610.3 153.8,613.4 155.9,612.5 157.9,612.3 160.0,612.4 161.6,609.3 164.1,593.9 166.1,583.7 168.2,563.1 171.3,542.6 174.8,520.0 178.5,488.6 179.5,472.0 181.5,455.7 183.6,437.2 186.7,423.9 188.7,413.6 190.8,413.3 192.8,412.6 194.5,413.4 196.3,413.0 198.0,413.0 201.0,404.8 203.1,405.0 205.1,406.4 207.2,406.0 209.0,405.1 210.7,406.2 212.5,405.1 214.2,404.7 216.0,404.5 217.7,404.7 219.5,404.8 221.6,405.3 223.6,404.8 225.7,412.6 227.3,412.3 229.0,413.1 230.6,413.4 232.3,413.2 233.9,413.6 235.9,413.3 238.0,412.2 240.0,412.6 241.6,404.8 243.3,403.7 245.1,404.0 247.0,403.8 248.8,404.8 250.7,404.7 252.5,404.8 254.4,405.4 256.1,405.3 257.8,404.9 259.5,404.8 261.2,404.3 262.9,405.0 264.6,404.4 266.3,398.2 267.7,407.5 270.8,408.9 272.9,416.7 278.0,427.0 285.2,445.4 286.2,442.4 288.3,443.0 290.3,448.5 294.4,468.0 296.5,468.7 298.5,468.3 300.6,469.0 302.6,455.7 303.7,447.1 305.7,447.5 310.8,463.9 312.9,480.3 317.0,490.6 320.1,505.0 322.5,476.2 324.2,478.3 327.3,490.6 328.3,507.0 329.7,522.4 332.4,523.1 334.5,521.4 336.2,521.4 337.9,521.1 339.6,521.5 341.3,521.1 343.0,520.2 344.7,520.4 346.4,521.4 348.4,552.9 350.0,553.7 351.7,552.3 353.4,552.8 355.0,552.9 357.0,546.7 358.6,547.3 360.2,546.4 361.8,547.1 363.5,546.5 365.1,547.7 366.7,548.0 368.3,547.7 370.4,543.6 372.2,543.5 374.1,543.8 375.9,542.7 377.8,543.1 379.6,542.6 381.7,546.3 383.5,546.4 385.2,546.3 387.0,546.0 388.7,546.5 390.5,546.6 392.2,545.7 394.0,545.7 396.1,548.7 397.8,549.0 399.5,548.2 401.2,549.3 402.9,549.3 404.6,549.9 406.3,549.2 408.8,528.2 412.5,526.6 414.1,527.1 415.8,526.3 417.4,526.4 419.0,526.9 420.6,525.8 422.2,526.5 423.9,526.1 425.5,526.0 427.1,525.9 428.8,527.0 430.4,526.0 432.0,526.6 434.7,550.8 437.1,551.4 439.0,551.1 440.8,551.4 442.7,552.2 444.6,551.0 446.4,551.7 448.3,551.8 450.4,545.3 454.5,543.6 456.6,536.0 458.0,534.0 459.2,473.4 461.1,473.0 462.3,442.6 465.8,438.9 467.6,439.0 469.5,439.5 471.3,439.4 473.2,439.5 475.0,438.9 477.1,445.7 478.5,442.2 481.2,442.6 482.6,452.4 483.9,452.4 485.3,513.4 487.4,516.5 488.8,544.2 491.5,547.3 493.5,547.3 495.6,547.8 497.6,548.3 501.1,526.8 504.8,529.9 506.4,529.8 508.0,530.8 509.6,531.1 511.3,529.9 512.9,530.1 514.5,530.3 516.1,530.9 518.2,529.9 520.2,529.5 522.3,529.9 524.3,529.9 525.8,549.4 529.5,551.0 531.5,550.7 533.6,549.8 535.6,549.8 537.4,549.4 539.2,550.5 541.0,550.8 542.8,551.4 547.5,534.6 549.4,534.5 551.2,534.9 553.1,534.0 556.1,531.9 559.2,526.4 560.9,526.8 562.6,526.7 564.4,527.0 566.1,527.2 567.8,526.4 569.5,527.2 572.2,541.1 575.7,534.0 581.2,536.0 582.4,519.6 586.5,504.2 589.0,463.1 590.6,450.4 595.2,447.7 598.2,446.3 600.9,452.4 607.5,454.9 610.6,487.8 614.7,520.6 615.7,541.1 618.8,545.7 620.4,546.7 622.1,546.8 623.7,547.3 625.4,547.5 627.0,547.3 631.1,542.2 632.8,541.7 634.5,541.3 636.2,541.1 638.2,541.0 640.3,542.2 642.7,545.3 644.4,545.4 646.0,544.4 647.7,544.4 649.3,544.5 651.0,544.3 652.6,544.8 655.7,549.8 660.8,551.4 662.6,551.3 664.3,551.0 666.1,551.0 667.8,551.4 669.6,551.5 671.3,552.0 673.1,552.4 675.0,551.5 676.8,552.8 678.7,552.2 680.5,551.4 682.4,551.8 685.0,526.8 688.5,522.7 690.0,509.3 691.6,508.8 693.3,508.9 694.9,508.8 696.5,508.3 698.2,509.4 699.8,508.7 701.9,504.2 703.5,485.7 706.4,484.1 708.4,485.7 711.1,512.4 713.8,514.5 716.2,526.4 717.9,525.7 720.3,504.2 723.4,501.7 726.5,506.2 730.6,514.9 732.7,514.9 736.4,492.9 738.8,491.9 743.3,488.8 745.0,499.1 748.1,501.1 750.7,494.9 753.2,498.0 754.2,506.7 755.9,507.7 757.7,507.0 759.4,507.3 761.4,529.9 765.5,531.9 769.6,537.0 771.7,546.3 775.8,549.4 776.8,555.5 778.7,555.6 780.5,555.0 782.4,555.1 784.2,555.6 786.1,555.9 787.9,555.7 789.6,556.8 791.4,555.9 793.1,555.9 794.9,557.6 796.6,557.1 798.4,557.2 800.0,556.6 801.7,557.3 803.3,556.4 805.0,557.2 806.6,558.0 808.2,557.8 809.9,557.5 811.5,556.8 813.2,557.0 814.8,557.2 816.5,556.6 818.2,557.6 819.9,557.2 821.6,557.5 823.3,556.8 825.0,557.0 827.1,556.4 829.1,557.2 831.2,556.6 833.2,557.8 835.3,558.1 837.3,558.0 839.0,558.5 840.7,558.5 842.5,558.4 844.2,557.6 845.9,558.0 847.6,558.0 849.6,559.5 851.4,559.3 853.1,558.9 854.9,558.9 856.6,559.4 858.4,559.4 860.1,560.2 861.9,560.7 863.6,559.9 865.4,560.7 867.1,560.1 868.5,536.5 870.2,513.9 871.8,490.3 873.9,480.7 875.7,481.5 877.5,481.5 879.3,480.7 881.2,480.5 883.0,480.5 884.8,480.6 886.6,481.1 888.7,462.6 890.5,462.1 892.4,462.6 893.8,470.8 895.8,501.6 898.5,540.2 902.0,516.0 903.8,515.7 905.5,515.0 908.2,486.8 910.2,487.1 912.3,486.2 913.7,502.6 915.3,505.3 917.0,505.7 918.6,505.0 920.3,505.2 921.9,505.3 923.6,504.7 925.6,510.8 927.7,530.3 929.5,530.2 931.4,531.4 934.2,560.7 935.9,560.8 937.6,561.1 939.3,560.7 941.0,560.1 944.1,551.9 945.7,552.3 947.4,551.9 949.0,551.4 950.7,552.4 952.3,551.9 954.1,551.3 955.8,551.8 957.6,551.8 959.3,550.6 961.1,550.3 962.8,550.9 964.6,549.9 967.7,551.9 969.8,559.5 971.6,559.9 973.4,559.0 975.2,558.9 977.0,559.5 978.7,559.1 980.3,560.4 982.0,560.3 983.7,559.4 985.4,560.6 987.0,560.9 988.7,560.5 990.4,560.1 992.1,560.6 993.7,560.0 995.4,560.7 997.5,534.9 999.1,534.4 1000.8,536.1 1002.4,535.9 1004.1,535.9 1005.7,536.1 1007.3,522.1 1010.8,505.7 1012.5,506.6 1014.2,505.9 1016.0,506.8 1017.7,506.9 1019.4,506.1 1021.1,506.7 1023.6,531.9 1026.3,531.3 1029.8,528.2 1031.4,532.3 1033.5,548.7 1035.5,560.0 1037.6,559.0 1039.3,558.7 1041.0,558.8 1042.7,558.8 1044.4,559.4 1046.1,558.9 1047.8,559.4 1053.0,562.1 1054.6,562.1 1056.2,561.8 1057.8,563.2 1059.5,562.4 1061.1,562.7 1062.7,563.1 1064.3,563.1 1066.3,564.1 1071.5,580.6 1077.6,600.1 1084.8,624.7 1088.9,641.1 1091.4,647.3 1093.1,648.0 1094.8,647.3 1096.5,648.1 1098.2,647.5 1099.9,647.6 1101.6,647.7 1103.3,647.7 1105.0,646.9 1106.6,647.5 1108.3,647.1 1109.9,646.8 1111.6,648.0 1113.2,647.0 1114.9,647.4 1116.6,647.8 1118.2,647.5 1119.9,647.1 1121.5,647.4 1123.2,647.4 1124.8,647.8 1126.5,646.6 1128.2,647.3 1129.8,646.8 1131.5,646.8 1133.1,647.6 1134.8,647.1 1136.5,647.2 1138.1,647.5 1139.8,647.7 1141.4,646.9 1143.1,647.1 1144.7,646.9 1146.4,646.9" fill="none" stroke="#F9E6D0" stroke-width="1.05" stroke-linejoin="round"/>
<path d="M16.2 287.2 L20 290.9 L23.8 287.2" fill="none" stroke="#ccccdc" stroke-width="1.5"/>
<path d="M847.4 58.6 L850 61.3 L852.6 58.6" fill="none" stroke="#6e9fff" stroke-width="1.3"/>
<path d="M1821.3 362.4 L1823.9 365.1 L1826.5 362.4" fill="none" stroke="#6e9fff" stroke-width="1.3"/>
</svg>
<div class="row">Webserver</div>
<div class="ax" style="right:1800.0px;top:229.0px;text-align:right">0</div>
<div class="ax" style="right:1800.0px;top:183.0px;text-align:right">100</div>
<div class="ax" style="right:1800.0px;top:137.0px;text-align:right">200</div>
<div class="ax" style="right:1800.0px;top:91.0px;text-align:right">300</div>
<div class="ax c" style="left:-48.5px;top:243.4px;width:200px">11:00</div>
<div class="ax c" style="left:37.5px;top:243.4px;width:200px">12:00</div>
<div class="ax c" style="left:122.5px;top:243.4px;width:200px">13:00</div>
<div class="ax c" style="left:208.5px;top:243.4px;width:200px">14:00</div>
<div class="ax c" style="left:294.5px;top:243.4px;width:200px">15:00</div>
<div class="ax c" style="left:379.5px;top:243.4px;width:200px">16:00</div>
<div class="ax c" style="left:465.5px;top:243.4px;width:200px">17:00</div>
<div class="ax c" style="left:551.5px;top:243.4px;width:200px">18:00</div>
<div class="ax" style="right:1800.0px;top:647.0px;text-align:right">0</div>
<div class="ax" style="right:1800.0px;top:614.0px;text-align:right">50</div>
<div class="ax" style="right:1800.0px;top:581.0px;text-align:right">100</div>
<div class="ax" style="right:1800.0px;top:548.0px;text-align:right">150</div>
<div class="ax" style="right:1800.0px;top:515.0px;text-align:right">200</div>
<div class="ax" style="right:1800.0px;top:482.0px;text-align:right">250</div>
<div class="ax" style="right:1800.0px;top:449.0px;text-align:right">300</div>
<div class="ax" style="right:1800.0px;top:416.0px;text-align:right">350</div>
<div class="ax" style="right:1800.0px;top:383.0px;text-align:right">400</div>
<div class="ax c" style="left:-48.5px;top:661.8px;width:200px">11:00</div>
<div class="ax c" style="left:29.5px;top:661.8px;width:200px">11:30</div>
<div class="ax c" style="left:108.5px;top:661.8px;width:200px">12:00</div>
<div class="ax c" style="left:186.5px;top:661.8px;width:200px">12:30</div>
<div class="ax c" style="left:264.5px;top:661.8px;width:200px">13:00</div>
<div class="ax c" style="left:342.5px;top:661.8px;width:200px">13:30</div>
<div class="ax c" style="left:421.5px;top:661.8px;width:200px">14:00</div>
<div class="ax c" style="left:499.5px;top:661.8px;width:200px">14:30</div>
<div class="ax c" style="left:577.5px;top:661.8px;width:200px">15:00</div>
<div class="ax c" style="left:655.5px;top:661.8px;width:200px">15:30</div>
<div class="ax c" style="left:734.5px;top:661.8px;width:200px">16:00</div>
<div class="ax c" style="left:812.5px;top:661.8px;width:200px">16:30</div>
<div class="ax c" style="left:890.5px;top:661.8px;width:200px">17:00</div>
<div class="ax c" style="left:968.5px;top:661.8px;width:200px">17:30</div>
<div class="ax c" style="left:1047.5px;top:661.8px;width:200px">18:00</div>
<div class="lh" style="left:812.1px;top:52.5px">Last *</div>
<div class="lh" style="left:868.4px;top:52.5px">Mean</div>
<div class="sep" style="left:675px;top:69.9px;width:240px"></div>
<div class="sep" style="left:675px;top:92.9px;width:240px"></div>
<div class="sep" style="left:675px;top:115.9px;width:240px"></div>
<div class="sep" style="left:675px;top:138.8px;width:240px"></div>
<div class="sep" style="left:675px;top:161.8px;width:240px"></div>
<div class="sep" style="left:675px;top:184.8px;width:240px"></div>
<div class="sep" style="left:675px;top:207.8px;width:240px"></div>
<div class="bar" style="left:683px;top:79.9px;background:#73BF69"></div>
<div class="lt" style="left:762.3px;top:76.3px">debug</div>
<div class="lt" style="left:812.1px;top:76.3px">0</div>
<div class="lt" style="left:868.4px;top:76.3px">0</div>
<div class="bar" style="left:683px;top:102.9px;background:#F2CC0C"></div>
<div class="lt" style="left:762.3px;top:99.3px">error</div>
<div class="lt" style="left:812.1px;top:99.3px">0</div>
<div class="lt" style="left:868.4px;top:99.3px">0.0232</div>
<div class="bar" style="left:683px;top:125.9px;background:#8AB8FF"></div>
<div class="lt" style="left:762.3px;top:122.3px">fatal</div>
<div class="lt" style="left:812.1px;top:122.3px">0</div>
<div class="lt" style="left:868.4px;top:122.3px">0</div>
<div class="bar" style="left:683px;top:148.8px;background:#FF780A"></div>
<div class="lt" style="left:762.3px;top:145.2px">info</div>
<div class="lt" style="left:812.1px;top:145.2px">0</div>
<div class="lt" style="left:868.4px;top:145.2px">0.116</div>
<div class="bar" style="left:683px;top:171.8px;background:#F2495C"></div>
<div class="lt" style="left:762.3px;top:168.2px">trace</div>
<div class="lt" style="left:812.1px;top:168.2px">0</div>
<div class="lt" style="left:868.4px;top:168.2px">0</div>
<div class="bar" style="left:683px;top:194.8px;background:#5794F2"></div>
<div class="lt" style="left:762.3px;top:191.2px">warn</div>
<div class="lt" style="left:812.1px;top:191.2px">0</div>
<div class="lt" style="left:868.4px;top:191.2px">118</div>
<div class="lh" style="left:1785.8px;top:356.3px">Last *</div>
<div class="sep" style="left:1171px;top:373.8px;width:663px"></div>
<div class="sep" style="left:1171px;top:396.8px;width:663px"></div>
<div class="sep" style="left:1171px;top:419.8px;width:663px"></div>
<div class="sep" style="left:1171px;top:442.8px;width:663px"></div>
<div class="sep" style="left:1171px;top:465.8px;width:663px"></div>
<div class="sep" style="left:1171px;top:488.8px;width:663px"></div>
<div class="sep" style="left:1171px;top:511.8px;width:663px"></div>
<div class="sep" style="left:1171px;top:534.8px;width:663px"></div>
<div class="sep" style="left:1171px;top:557.8px;width:663px"></div>
<div class="sep" style="left:1171px;top:580.8px;width:663px"></div>
<div class="sep" style="left:1171px;top:603.8px;width:663px"></div>
<div class="sep" style="left:1171px;top:626.8px;width:663px"></div>
<div class="sep" style="left:1171px;top:649.8px;width:663px"></div>
<div class="sep" style="left:1171px;top:672.8px;width:663px"></div>
<div class="bar" style="left:1179px;top:383.8px;background:#705DA0"></div>
<div class="lt lw" style="left:1258.1px;top:379.5px">/actuator/prometheus GET 200 None</div>
<div class="lt" style="left:1785.8px;top:379.5px">40.0</div>
<div class="bar" style="left:1179px;top:406.8px;background:#CF6A28"></div>
<div class="lt lw" style="left:1258.1px;top:402.5px">/ GET 200 None</div>
<div class="lt" style="left:1785.8px;top:402.5px">39.0</div>
<div class="bar" style="left:1179px;top:429.8px;background:#A03A9A"></div>
<div class="lt lw" style="left:1258.1px;top:425.5px">/actuator/health GET 200 None</div>
<div class="lt" style="left:1785.8px;top:425.5px">19.5</div>
<div class="bar" style="left:1179px;top:452.8px;background:#FCEACA"></div>
<div class="lt lw" style="left:1258.1px;top:448.5px">/ POST 200 None</div>
<div class="lt" style="left:1785.8px;top:448.5px">10.3</div>
<div class="bar" style="left:1179px;top:475.8px;background:#73BF69"></div>
<div class="lt lw" style="left:1258.1px;top:471.5px">root GET 401 None</div>
<div class="lt" style="left:1785.8px;top:471.5px">0</div>
<div class="bar" style="left:1179px;top:498.8px;background:#F2CC0C"></div>
<div class="lt lw" style="left:1258.1px;top:494.5px">/favicon.ico GET 404 None</div>
<div class="lt" style="left:1785.8px;top:494.5px">0</div>
<div class="bar" style="left:1179px;top:521.8px;background:#8AB8FF"></div>
<div class="lt lw" style="left:1258.1px;top:517.5px">root GET 101 None</div>
<div class="lt" style="left:1785.8px;top:517.5px">0</div>
<div class="bar" style="left:1179px;top:544.8px;background:#FF780A"></div>
<div class="lt lw" style="left:1258.1px;top:540.5px">/VAADIN/static/push/vaadinPush-min.js GET 304 None</div>
<div class="lt" style="left:1785.8px;top:540.5px">0</div>
<div class="bar" style="left:1179px;top:567.8px;background:#F2495C"></div>
<div class="lt lw" style="left:1258.1px;top:563.5px">/icons/icon.png GET 304 None</div>
<div class="lt" style="left:1785.8px;top:563.5px">0</div>
<div class="bar" style="left:1179px;top:590.8px;background:#5794F2"></div>
<div class="lt lw" style="left:1258.1px;top:586.5px">/lib/chartjs/chartjs.js GET 304 None</div>
<div class="lt" style="left:1785.8px;top:586.5px">0</div>
<div class="bar" style="left:1179px;top:613.8px;background:#B877D9"></div>
<div class="lt lw" style="left:1258.1px;top:609.5px">/lib/cycle.js GET 304 None</div>
<div class="lt" style="left:1785.8px;top:609.5px">0</div>
<div class="bar" style="left:1179px;top:636.8px;background:#705DA0"></div>
<div class="lt lw" style="left:1258.1px;top:632.5px">/lib/jquery.min.js GET 304 None</div>
<div class="lt" style="left:1785.8px;top:632.5px">0</div>
<div class="bar" style="left:1179px;top:659.8px;background:#37872D"></div>
<div class="lt lw" style="left:1258.1px;top:655.5px">/src/chartfunc.js GET 304 None</div>
<div class="lt" style="left:1785.8px;top:655.5px">0</div>
<div class="blk" style="left:937px;top:5px;width:905px;height:271px;"></div>
<div class="blk" style="left:706px;top:72px;width:52px;height:132px;"></div>
<div class="blk" style="left:1199px;top:376px;width:58px;height:294px;"></div>
</body></html>
